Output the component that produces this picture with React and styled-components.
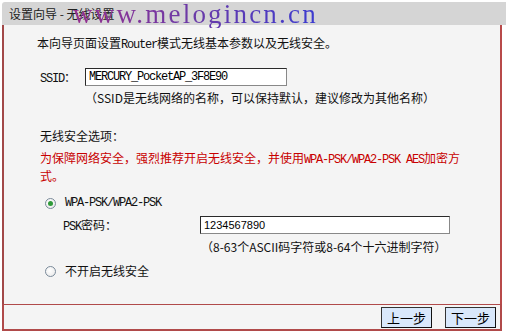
import React from "react";
import styled, { createGlobalStyle } from "styled-components";

const GlobalStyle = createGlobalStyle`
  html, body {
    margin: 0;
    padding: 0;
    background: #ffffff;
  }
  body {
    font-family: "Noto Sans CJK SC", "Liberation Sans", sans-serif;
    font-size: 12px;
    color: #111;
  }
`;

const Page = styled.div`
  position: relative;
  width: 506px;
  height: 333px;
  padding-top: 2px;
  box-sizing: border-box;
  display: flex;
  flex-direction: column;
`;

const TitleBar = styled.div`
  height: 23px;
  margin-left: 2px;
  background: #d5d5d5;
  border-top-left-radius: 3px;
  display: flex;
  align-items: center;
  padding-left: 7px;
  font-size: 12px;
  color: #222;
`;

const Watermark = styled.div`
  position: absolute;
  left: 73px;
  top: 1px;
  font-family: "Liberation Serif", serif;
  font-size: 27px;
  line-height: 27px;
  letter-spacing: 2.2px;
  background: linear-gradient(90deg, #96308e 0%, #6a3aa8 50%, #3b3bd0 100%);
  -webkit-background-clip: text;
  background-clip: text;
  color: transparent;
  pointer-events: none;
`;

const Panel = styled.div`
  height: 279px;
  margin-left: 2px;
  width: 500px;
  box-sizing: border-box;
  background: #f4f4f4;
  border-left: 2px solid #a24848;
  border-right: 2px solid #b84a4a;
  padding-top: 9px;
  display: flex;
  flex-direction: column;
`;

const Line = styled.div`
  height: 18px;
  line-height: 18px;
  margin-top: ${(p) => p.$mt || 0}px;
  padding-left: ${(p) => p.$pl || 0}px;
  white-space: nowrap;
`;

const FieldRow = styled.div`
  display: flex;
  align-items: center;
  height: 18px;
  line-height: 18px;
  margin-top: ${(p) => p.$mt || 0}px;
  padding-left: ${(p) => p.$pl || 0}px;
  white-space: nowrap;
`;

const Mono = styled.span`
  font-family: "Liberation Mono", monospace;
  font-size: 12px;
  line-height: 12px;
  letter-spacing: -1.2px;
`;

const Label = styled.span`
  display: inline-block;
  width: ${(p) => p.$w}px;
  flex-shrink: 0;
`;

const TextInput = styled.div`
  width: ${(p) => p.$w}px;
  height: 18px;
  box-sizing: border-box;
  background: #fff;
  border: 1px solid #2a2a2a;
  border-right-color: #888;
  border-bottom-color: #888;
  display: flex;
  align-items: center;
  padding-left: 3px;
  font-family: ${(p) => (p.$mono ? '"Liberation Mono", monospace' : '"Liberation Sans", sans-serif')};
  font-size: ${(p) => (p.$mono ? 12 : 11)}px;
  letter-spacing: ${(p) => (p.$mono ? -1.2 : 0)}px;
  color: #000;
`;

const Warning = styled.div`
  margin-top: 4px;
  padding-left: 36px;
  line-height: 18px;
  white-space: nowrap;
  color: #c80000;
`;

const Radio = styled.span`
  width: 11px;
  height: 11px;
  border-radius: 50%;
  border: 1px solid #7a8a9a;
  background: radial-gradient(circle at 40% 40%, #ffffff 0%, #e6e6e6 100%);
  box-sizing: border-box;
  display: inline-flex;
  flex-shrink: 0;
  align-items: center;
  justify-content: center;
  margin-right: 9px;
  &::after {
    content: "";
    width: 5px;
    height: 5px;
    border-radius: 50%;
    background: ${(p) => (p.$checked ? "#2f9a3a" : "transparent")};
  }
`;

const Footer = styled.div`
  height: 27px;
  width: 500px;
  margin-left: 2px;
  box-sizing: border-box;
  background: #f4f4f4;
  border: 2px solid #b04a4a;
  border-top-width: 1px;
  display: flex;
  align-items: center;
  justify-content: flex-end;
  gap: 13px;
  padding-right: 4px;
`;

const Button = styled.button`
  width: 51px;
  height: 21px;
  padding: 0;
  background: #d9e8fb;
  border: 1px solid #333;
  border-right-color: #111;
  border-bottom-color: #111;
  font-family: "Noto Sans CJK SC", sans-serif;
  font-size: 13px;
  line-height: 19px;
  color: #000;
`;

export default function App() {
  return (
    <>
      <GlobalStyle />
      <Page>
        <TitleBar>设置向导 - 无线设置</TitleBar>
        <Watermark>www.melogincn.cn</Watermark>
        <Panel>
          <Line $pl={33}>
            本向导页面设置<Mono>Router</Mono>模式无线基本参数以及无线安全。
          </Line>
          <FieldRow $mt={16} $pl={36}>
            <Label $w={45}>
              <Mono>SSID</Mono>：
            </Label>
            <TextInput $w={202} $mono>
              MERCURY_PocketAP_3F8E90
            </TextInput>
          </FieldRow>
          <Line $mt={3} $pl={81}>
            （SSID是无线网络的名称，可以保持默认，建议修改为其他名称）
          </Line>
          <Line $mt={20} $pl={36}>
            无线安全选项：
          </Line>
          <Warning>
            为保障网络安全，强烈推荐开启无线安全，并使用<Mono>WPA-PSK/WPA2-PSK AES</Mono>加密方
            <br />
            式。
          </Warning>
          <FieldRow $mt={9} $pl={41}>
            <Radio $checked />
            <Mono>WPA-PSK/WPA2-PSK</Mono>
          </FieldRow>
          <FieldRow $mt={4} $pl={59}>
            <Label $w={137}>
              <Mono>PSK</Mono>密码：
            </Label>
            <TextInput $w={250}>1234567890</TextInput>
          </FieldRow>
          <Line $mt={4} $pl={197}>
            （8-63个ASCII码字符或8-64个十六进制字符）
          </Line>
          <FieldRow $mt={6} $pl={41}>
            <Radio />
            不开启无线安全
          </FieldRow>
        </Panel>
        <Footer>
          <Button>上一步</Button>
          <Button>下一步</Button>
        </Footer>
      </Page>
    </>
  );
}
